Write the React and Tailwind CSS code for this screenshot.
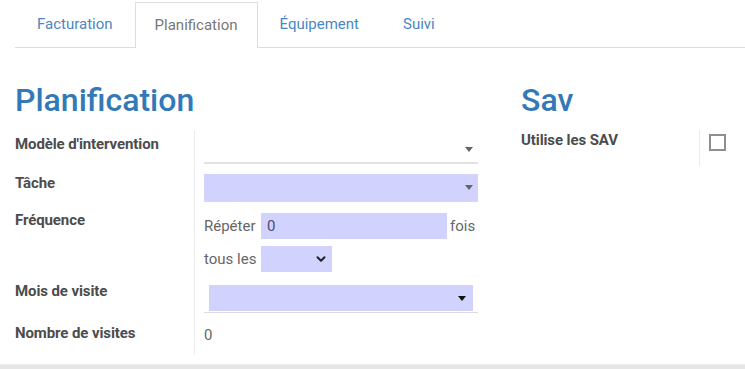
import { ChevronDown } from 'lucide-react';

const tabs = ['Facturation', 'Planification', 'Équipement', 'Suivi'];

function Caret({ className = '' }) {
  return (
    <svg width="8" height="5" viewBox="0 0 8 5" className={className}>
      <path d="M0 0h8L4 5z" fill="currentColor" />
    </svg>
  );
}

function Label({ children, className = 'w-[179px]' }) {
  return (
    <div className={`shrink-0 text-[15px] leading-5 font-bold text-[#4c4c4c] tracking-[-0.1px] ${className}`}>
      {children}
    </div>
  );
}

export default function App() {
  return (
    <div className="w-[745px] h-[369px] bg-white overflow-hidden flex flex-col font-['Roboto',sans-serif]">
      {/* tabs */}
      <div className="ml-[15px] mt-[2px] h-[46px] flex items-end border-b border-[#dedede]">
        {tabs.map((t) => (
          <div
            key={t}
            className={
              t === 'Planification'
                ? 'h-[46px] -mb-px px-[19px] flex items-center bg-white border border-b-0 border-[#dedede] text-[15px] text-[#777]'
                : 'h-[46px] px-[21px] flex items-center text-[15px] text-[#4a87c4] border border-transparent'
            }
          >
            {t}
          </div>
        ))}
      </div>

      <div className="flex flex-1 pl-[15px] pt-[34px]">
        {/* left group */}
        <div className="w-[463px]">
          <h1 className="text-[32px] leading-[36px] font-medium text-[#3479b7] mb-[12px]">Planification</h1>

          <div className="flex h-[36px]">
            <Label className="w-[179px] pt-[4px]">Modèle d'intervention</Label>
            <div className="flex-1 border-l border-[#ebebeb] pl-[9px]">
              <div className="mt-[6px] h-[28px] border-b-2 border-[#e2e2e2] flex items-center justify-end pr-[5px] text-[#666]">
                <Caret />
              </div>
            </div>
          </div>

          <div className="flex h-[42px]">
            <Label className="w-[179px] pt-[7px]">Tâche</Label>
            <div className="flex-1 border-l border-[#ebebeb] pl-[9px]">
              <div className="mt-[8px] h-[28px] bg-[#d2d2ff] border-b border-[#d8d8e8] flex items-center justify-end pr-[5px] text-[#666]">
                <Caret />
              </div>
            </div>
          </div>

          <div className="flex h-[68px]">
            <Label className="w-[179px] pt-[2px]">Fréquence</Label>
            <div className="flex-1 border-l border-[#ebebeb] pl-[9px] text-[15px] text-[#666]">
              <div className="mt-[5px] flex items-center h-[26px]">
                <span className="w-[57px]">Répéter</span>
                <div className="w-[186px] h-[26px] bg-[#d2d2ff] pl-[6px] flex items-center text-[#4c4c6c]">0</div>
                <span className="ml-[3px]">fois</span>
              </div>
              <div className="mt-[7px] flex items-center h-[26px]">
                <span className="w-[57px]">tous les</span>
                <div className="w-[71px] h-[26px] bg-[#d2d2ff] flex items-center justify-end pr-[4px] text-[#222]">
                  <ChevronDown size={14} strokeWidth={3.5} />
                </div>
              </div>
            </div>
          </div>

          <div className="flex h-[42px]">
            <Label className="w-[179px] pt-[5px]">Mois de visite</Label>
            <div className="flex-1 border-l border-[#ebebeb] pl-[9px]">
              <div className="mt-[9px] pb-[1px] border-b border-[#dcdcdc]">
                <div className="mx-[5px] h-[26px] bg-[#d2d2ff] flex items-center justify-end pr-[7px] text-[#111]">
                  <Caret />
                </div>
              </div>
            </div>
          </div>

          <div className="flex h-[37px]">
            <Label className="w-[179px] pt-[5px]">Nombre de visites</Label>
            <div className="flex-1 border-l border-[#ebebeb] pl-[9px] pt-[7px] text-[15px] leading-5 text-[#666]">0</div>
          </div>
        </div>

        {/* right group */}
        <div className="ml-[43px] flex-1">
          <h1 className="text-[32px] leading-[36px] font-medium text-[#3479b7] mb-[12px]">Sav</h1>
          <div className="flex h-[36px]">
            <Label className="w-[178px] pt-0">Utilise les SAV</Label>
            <div className="border-l border-[#ebebeb] pl-[9px] pt-[4px]">
              <div className="w-[17px] h-[17px] border-2 border-[#8f8f8f] bg-white" />
            </div>
          </div>
        </div>
      </div>

      <div className="h-[5px] bg-[#e6e6e6] border-t border-[#eeeeee]" />
    </div>
  );
}
